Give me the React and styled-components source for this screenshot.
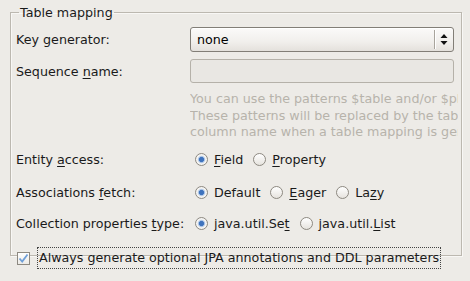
import React from "react";
import styled, { createGlobalStyle } from "styled-components";

const Global = createGlobalStyle`
  html, body { margin: 0; padding: 0; background: #edebe7; }
  body {
    width: 470px; height: 281px; overflow: hidden;
    font-family: "DejaVu Sans", "Liberation Sans", sans-serif;
    font-size: 12.7px; color: #000;
  }
`;

const Page = styled.div`
  padding: 0 8px 0 10px;
`;

const Frame = styled.fieldset`
  margin: 5px 0 0 0;
  padding: 7px 7px 2px 5px;
  border: 1px solid #bcb8b0;
  border-radius: 0;
  box-shadow: 1px 1px 0 #f8f7f5, inset 1px 1px 0 #f8f7f5;
  height: 251px;
  box-sizing: border-box;
  min-width: 0;
`;

const Legend = styled.legend`
  margin-left: 3px;
  padding: 0 1px;
  line-height: 15px;
  color: #1a1a1a;
`;

const Row = styled.div`
  display: flex;
  align-items: center;
  height: ${(p) => p.$h || 17}px;
  margin-top: ${(p) => p.$mt || 0}px;
`;

const Label = styled.div`
  width: 174px;
  flex: none;
  white-space: nowrap;
  color: #1a1a1a;
`;

const U = styled.span`
  text-decoration: underline;
  text-underline-offset: 2px;
`;

const Combo = styled.div`
  flex: 1;
  height: 25px;
  box-sizing: border-box;
  border: 1px solid #827e77;
  border-radius: 3px;
  background: linear-gradient(#fbfaf9, #f1efec 60%, #e4e1dc);
  display: flex;
  align-items: center;
  box-shadow: inset 0 1px 0 #fff;
`;

const ComboText = styled.div`
  flex: 1;
  padding-left: 6px;
`;

const ComboSep = styled.div`
  width: 1px;
  height: 19px;
  background: #a8a49c;
  box-shadow: 1px 0 0 #fff;
`;

const ComboArrows = styled.div`
  width: 18px;
  display: flex;
  justify-content: center;
  align-items: center;
`;

const TextField = styled.div`
  flex: 1;
  height: 24px;
  box-sizing: border-box;
  border: 1px solid #b5b1a9;
  border-radius: 3px;
  background: #e9e7e3;
`;

const Hint = styled.div`
  margin: 8px -4px 0 174px;
  overflow: hidden;
  white-space: nowrap;
  color: #b7b3ab;
  line-height: 16.5px;
`;

const Options = styled.div`
  display: flex;
  align-items: center;
  gap: 10px;
`;

const Option = styled.label`
  display: flex;
  align-items: center;
  gap: 6px;
  margin-left: ${(p) => p.$ml || 0}px;
  color: #1a1a1a;
`;

const Radio = styled.span`
  width: 13px;
  height: 13px;
  box-sizing: border-box;
  border-radius: 50%;
  border: 1px solid #8d8981;
  background: ${(p) =>
    p.$on
      ? "radial-gradient(circle, #3f73bd 0 2.2px, #9dbbe3 2.8px, #f5f4f2 4.2px)"
      : "linear-gradient(#ffffff, #e6e3de)"};
  flex: none;
`;

const CheckRow = styled.div`
  display: flex;
  align-items: center;
  height: 22px;
  margin-top: 15px;
  padding-left: 1px;
`;

const CheckBox = styled.span`
  width: 13px;
  height: 13px;
  box-sizing: border-box;
  border: 1px solid #8d8981;
  background: linear-gradient(#ffffff, #eceae6);
  display: flex;
  align-items: center;
  justify-content: center;
  flex: none;
  margin-top: 2px;
`;

const Focus = styled.div`
  margin-left: 7px;
  height: 22px;
  box-sizing: border-box;
  border: 1px dotted #444;
  padding: 0 1px;
  display: flex;
  align-items: center;
  color: #1a1a1a;
`;

const Arrows = () => (
  <svg width="8" height="13" viewBox="0 0 8 13">
    <path d="M4 1 L7.5 5 L0.5 5 Z" fill="#111" />
    <path d="M4 12 L7.5 8 L0.5 8 Z" fill="#111" />
  </svg>
);

const Check = () => (
  <svg width="11" height="11" viewBox="0 0 11 11">
    <path d="M1.5 5.5 L4.2 8.5 L9.5 1.5" fill="none" stroke="#6f9fd8" strokeWidth="1.8" />
  </svg>
);

export default function App() {
  return (
    <>
      <Global />
      <Page>
        <Frame>
          <Legend>Table mapping</Legend>
          <Row $h={25}>
            <Label>Key generator:</Label>
            <Combo>
              <ComboText>none</ComboText>
              <ComboSep />
              <ComboArrows>
                <Arrows />
              </ComboArrows>
            </Combo>
          </Row>
          <Row $h={24} $mt={7}>
            <Label>
              Sequence <U>n</U>ame:
            </Label>
            <TextField />
          </Row>
          <Hint>
            You can use the patterns $table and/or $pkColumn to form the sequence name.
            <br />
            These patterns will be replaced by the table name and the primary key
            <br />
            column name when a table mapping is generated.
          </Hint>
          <Row $mt={10}>
            <Label>
              Entity <U>a</U>ccess:
            </Label>
            <Options>
              <Option $ml={5}>
                <Radio $on />
                <span>
                  <U>F</U>ield
                </span>
              </Option>
              <Option>
                <Radio />
                <span>
                  <U>P</U>roperty
                </span>
              </Option>
            </Options>
          </Row>
          <Row $mt={16}>
            <Label>
              Associations <U>f</U>etch:
            </Label>
            <Options>
              <Option $ml={5}>
                <Radio $on />
                <span>Default</span>
              </Option>
              <Option>
                <Radio />
                <span>
                  <U>E</U>ager
                </span>
              </Option>
              <Option>
                <Radio />
                <span>
                  La<U>z</U>y
                </span>
              </Option>
            </Options>
          </Row>
          <Row $mt={14}>
            <Label>
              Collection properties <U>t</U>ype:
            </Label>
            <Options>
              <Option $ml={5}>
                <Radio $on />
                <span>
                  java.util.Se<U>t</U>
                </span>
              </Option>
              <Option>
                <Radio />
                <span>
                  java.util.<U>L</U>ist
                </span>
              </Option>
            </Options>
          </Row>
          <CheckRow>
            <CheckBox>
              <Check />
            </CheckBox>
            <Focus>Always generate optional JPA annotations and DDL parameters</Focus>
          </CheckRow>
        </Frame>
      </Page>
    </>
  );
}
